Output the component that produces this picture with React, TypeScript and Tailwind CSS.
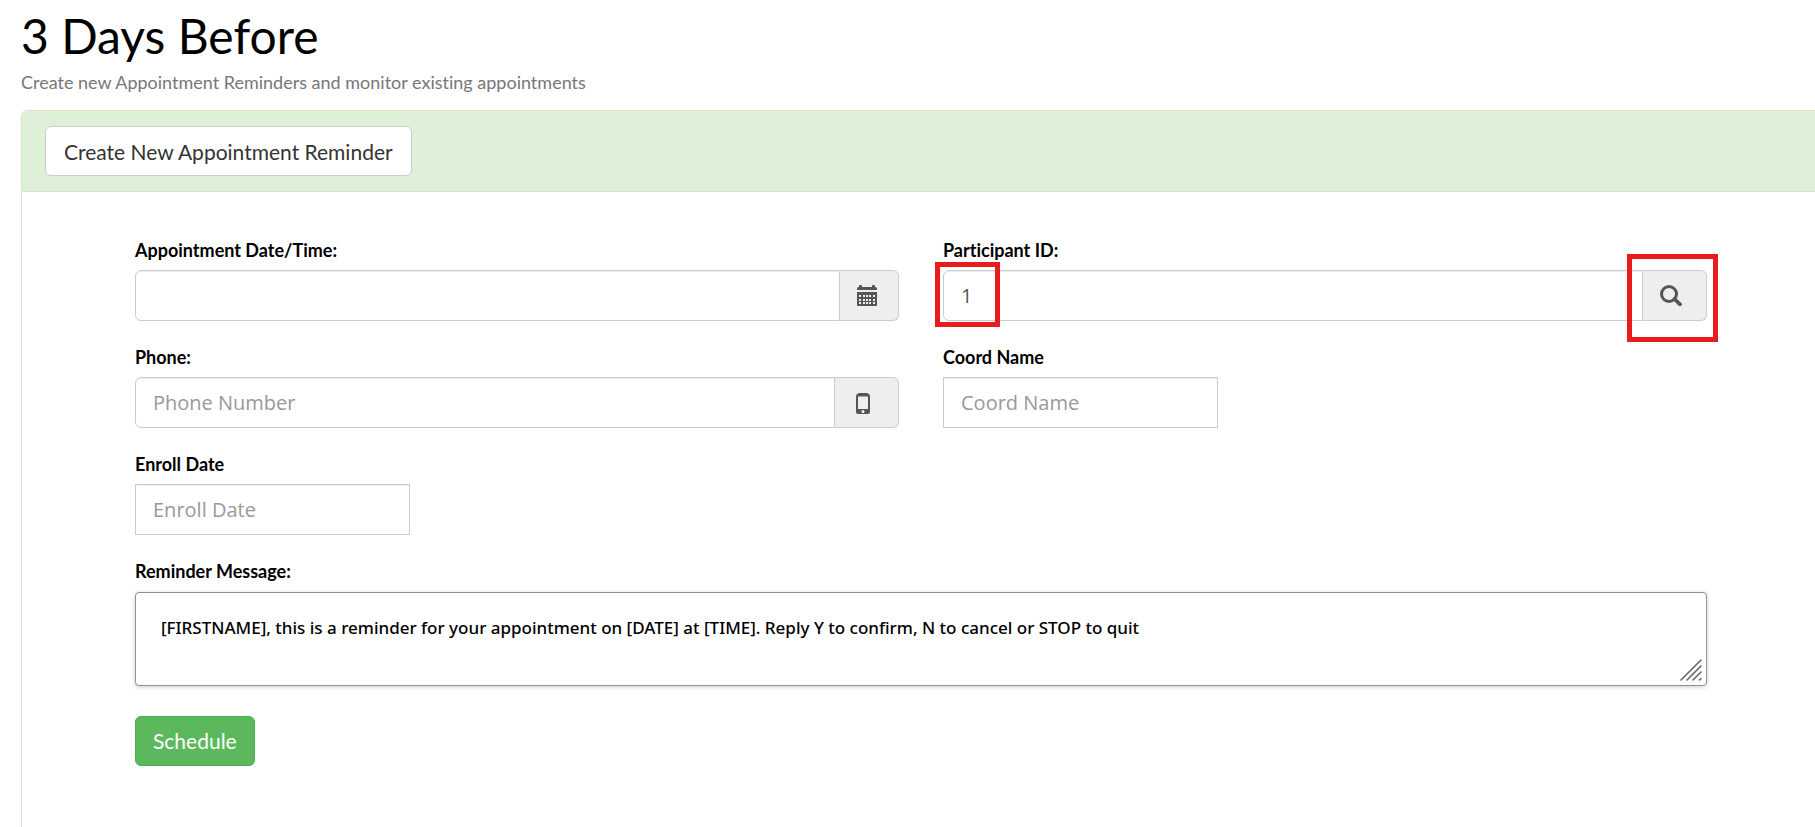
import { useState } from "react";
import type { ReactNode } from "react";

const inputBase =
  "h-[51px] min-w-0 border border-[#ccc] bg-white px-[17px] font-['Open_Sans',sans-serif] text-[20px] text-[#555] shadow-[inset_0_1px_1px_rgba(0,0,0,0.075)] outline-none placeholder:text-[#999]";

const addonBase =
  "flex h-[51px] shrink-0 items-center rounded-r-md border border-l-0 border-[#ccc] bg-[#eee] pl-[17px] text-[#555]";

function Field({ id, label, children }: { id: string; label: string; children: ReactNode }) {
  return (
    <div>
      <label htmlFor={id} className="mb-1.5 block text-[18px] leading-7 font-bold text-black">
        {label}
      </label>
      {children}
    </div>
  );
}

function CalendarIcon() {
  const columns = [2, 6, 9, 12, 16];
  const rows = [10, 14, 17];
  return (
    <svg width="20" height="21" viewBox="0 0 20 21" aria-hidden="true">
      <path
        fill="currentColor"
        d="M0 5V3.5Q0 2 1.5 2H2V1Q2 0 3 0H4Q5 0 5 1V2H15V1Q15 0 16 0H17Q18 0 18 1V2H18.5Q20 2 20 3.5V5ZM0 7H20V20Q20 21 19 21H1Q0 21 0 20Z"
      />
      {rows.map((y) => columns.map((x) => <rect key={`${x}-${y}`} x={x} y={y} width="2" height="2" fill="#eee" />))}
    </svg>
  );
}

function PhoneIcon() {
  return (
    <svg width="14" height="21" viewBox="0 0 14 21" aria-hidden="true">
      <path
        fill="currentColor"
        fillRule="evenodd"
        d="M3 0H11Q14 1 14 3V19Q14 21 12 21H2Q0 21 0 19V3Q0 1 3 0ZM2 3.5V16H12V3.5ZM7 17A1.6 1.6 0 1 0 7 20.2A1.6 1.6 0 1 0 7 17Z"
      />
    </svg>
  );
}

function SearchIcon() {
  return (
    <svg width="22" height="21" viewBox="0 0 22 21" fill="none" stroke="currentColor" aria-hidden="true">
      <circle cx="9" cy="9" r="7.5" strokeWidth="3" />
      <path d="M14.5 14L20 19.3" strokeWidth="3.8" strokeLinecap="round" />
    </svg>
  );
}

export default function App() {
  const [participant, setParticipant] = useState("1");
  const [message, setMessage] = useState(
    "[FIRSTNAME], this is a reminder for your appointment on [DATE] at [TIME]. Reply Y to confirm, N to cancel or STOP to quit",
  );

  return (
    <div className="flex min-h-screen flex-col overflow-hidden bg-white pl-[21px] font-[Lato,sans-serif] [font-variant-ligatures:none]">
      <header className="h-[110px] pt-[7px]">
        <h1 className="text-[48px] leading-[58px] text-black">3 Days Before</h1>
        <p className="mt-1 text-[18px] leading-[26px] text-[#777]">
          Create new Appointment Reminders and monitor existing appointments
        </p>
      </header>

      <main className="flex-1 rounded-tl-md border-t border-l border-[#d6e9c6]">
        <div className="rounded-tl-md border-b border-[#d6e9c6] bg-[#dff0d8] px-[23px] py-[15px]">
          <button
            type="button"
            className="block h-[50px] rounded-md border border-[#ccc] bg-white px-[18px] pt-0.5 text-[21px] text-[#333]"
          >
            Create New Appointment Reminder
          </button>
        </div>

        <form className="pt-[44px] pr-[108px] pl-[113px]" onSubmit={(e) => e.preventDefault()}>
          <div className="grid grid-cols-2 gap-x-11 gap-y-[22px]">
            <Field id="when" label="Appointment Date/Time:">
              <div className="flex">
                <input id="when" type="text" className={`${inputBase} flex-1 rounded-l-md`} />
                <button type="button" aria-label="Pick a date" className={`${addonBase} w-[59px]`}>
                  <CalendarIcon />
                </button>
              </div>
            </Field>

            <Field id="participant" label="Participant ID:">
              <div className="relative flex">
                <input
                  id="participant"
                  type="text"
                  value={participant}
                  onChange={(e) => setParticipant(e.target.value)}
                  className={`${inputBase} flex-1 rounded-l-md`}
                />
                <button type="button" aria-label="Search" className={`${addonBase} w-[64px]`}>
                  <SearchIcon />
                </button>
                <div className="pointer-events-none absolute -top-2 -left-2 h-[65px] w-[65px] border-5 border-[#e81c1c]" />
                <div className="pointer-events-none absolute -top-4 -right-[11px] h-[88px] w-[91px] border-5 border-[#e81c1c]" />
              </div>
            </Field>

            <Field id="phone" label="Phone:">
              <div className="flex">
                <input
                  id="phone"
                  type="tel"
                  placeholder="Phone Number"
                  className={`${inputBase} flex-1 rounded-l-md`}
                />
                <span className={`${addonBase} w-[64px]`}>
                  <span className="pt-0.5 pl-1">
                    <PhoneIcon />
                  </span>
                </span>
              </div>
            </Field>

            <Field id="coord" label="Coord Name">
              <input id="coord" type="text" placeholder="Coord Name" className={`${inputBase} block w-[275px]`} />
            </Field>

            <Field id="enroll" label="Enroll Date">
              <input id="enroll" type="text" placeholder="Enroll Date" className={`${inputBase} block w-[275px]`} />
            </Field>

            <div className="col-span-2">
              <Field id="message" label="Reminder Message:">
                <div className="relative pt-px">
                  <textarea
                    id="message"
                    value={message}
                    onChange={(e) => setMessage(e.target.value)}
                    className="block h-[94px] w-full resize-none rounded-[4px] border border-[#8f8f9d] bg-white px-[25px] pt-[22px] font-['Noto_Sans',sans-serif] text-[17px] leading-[26px] font-medium text-black shadow-[0_1px_4px_rgba(0,0,0,0.2)] outline-none"
                  />
                  <svg
                    width="24"
                    height="24"
                    viewBox="0 0 24 24"
                    className="pointer-events-none absolute right-1 bottom-1"
                    stroke="#666"
                    strokeWidth="1.6"
                    strokeLinecap="round"
                    aria-hidden="true"
                  >
                    <path d="M2 22L22 2M8 22L22 8M14 22L22 14M20.5 22L22 20.5" />
                  </svg>
                </div>
              </Field>
            </div>
          </div>

          <button
            type="submit"
            className="mt-[30px] block h-[50px] rounded-md border border-[#4cae4c] bg-[#5cb85c] px-[17px] text-[21px] text-white"
          >
            Schedule
          </button>
        </form>
      </main>
    </div>
  );
}
